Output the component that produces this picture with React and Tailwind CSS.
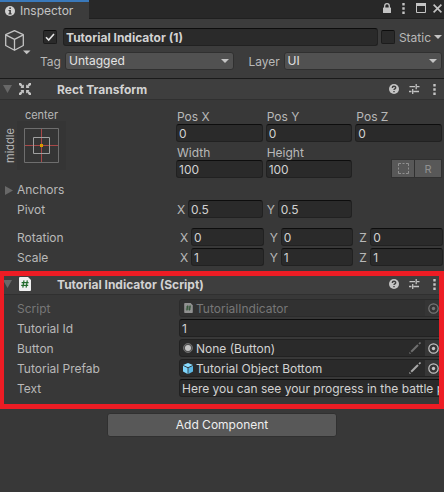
import React from "react";

const fieldBox =
  "h-[18px] min-w-0 rounded-[3px] border border-[#212121] border-t-[#0d0d0d] bg-[#2a2a2a] px-[2px] pt-px text-[12px] leading-4 text-[#d2d2d2] outline-none";

function Field({ label, value, className = "" }) {
  return (
    <input aria-label={label} defaultValue={value} className={`${fieldBox} w-full flex-1 ${className}`} />
  );
}

function Stacked({ label, value }) {
  return (
    <label className="flex min-w-0 flex-1 flex-col">
      <span className="h-4 pt-px pl-px leading-4">{label}</span>
      <input defaultValue={value} className={`${fieldBox} w-full`} />
    </label>
  );
}

function Axis({ name, value }) {
  return (
    <label className="flex min-w-0 flex-1 items-center">
      <span className="w-[11px] shrink-0 pt-[2px]">{name}</span>
      <input defaultValue={value} className={`${fieldBox} w-full flex-1`} />
    </label>
  );
}

function Caret({ className = "" }) {
  return (
    <svg viewBox="0 0 8 4" className={`h-1 w-2 ${className}`} fill="#c4c4c4" aria-hidden="true">
      <path d="M0 0h8L4 4z" />
    </svg>
  );
}

function Dropdown({ label, value, options, labelClass }) {
  return (
    <label className="flex min-w-0 flex-1 items-center">
      <span className={`shrink-0 pt-[2px] ${labelClass}`}>{label}</span>
      <span className="relative flex min-w-0 flex-1">
        <select
          defaultValue={value}
          className="h-[18px] w-full appearance-none rounded-[3px] border border-[#303030] bg-[#515151] px-[3px] text-[12px] leading-4 text-[#e4e4e4] outline-none"
        >
          {options.map((o) => (
            <option key={o}>{o}</option>
          ))}
        </select>
        <Caret className="pointer-events-none absolute top-[7px] right-[5px]" />
      </span>
    </label>
  );
}

function Kebab() {
  return (
    <svg viewBox="0 0 3 11" className="h-[11px] w-[3px]" fill="#c4c4c4" aria-hidden="true">
      <path d="M0.3 0h2.4v2.4H0.3zM0.3 4.3h2.4v2.4H0.3zM0.3 8.6h2.4V11H0.3z" />
    </svg>
  );
}

function ComponentHeader({ title, icon }) {
  return (
    <header className="flex h-[22px] items-center border-t border-b border-t-[#1a1a1a] border-b-[#303030] bg-[#3e3e3e] pr-2 pl-[3px]">
      <button aria-label={`Toggle ${title}`} className="mr-[7px]">
        <svg viewBox="0 0 9 8" className="h-2 w-[9px]" fill="#686868">
          <path d="M0 0h9L4.500 8z" />
        </svg>
      </button>
      {icon}
      <h2 className="ml-[26px] flex-1 pt-[2px] text-[12px] leading-4 font-bold text-[#d2d2d2]">{title}</h2>
      <button aria-label="Help" className="mr-[10px]">
        <svg viewBox="0 0 10 10" className="h-[10px] w-[10px]">
          <circle cx="5" cy="5" r="5" fill="#c4c4c4" />
          <path d="M3.300 3.900C3.300 1.800 6.700 1.800 6.700 3.700C6.700 4.900 5 4.800 5 6.100M5 6.900V8.300" fill="none" stroke="#3e3e3e" strokeWidth="1.400" />
        </svg>
      </button>
      <button aria-label="Presets" className="mr-[13px]">
        <svg viewBox="0 0 11 10" className="h-[10px] w-[11px]" stroke="#c4c4c4" strokeWidth="1.300" fill="none">
          <path d="M0.500 2.700H6M8 2.700H10.500M7.200 0V5.200M0 7.500H2.500M4.500 7.500H10M3.700 5V10" />
        </svg>
      </button>
      <button aria-label="More options">
        <Kebab />
      </button>
    </header>
  );
}

function ScriptIcon({ className = "" }) {
  return (
    <svg viewBox="0 0 12 14" className={className} aria-hidden="true">
      <path d="M1 0H9L12 3V13Q12 14 11 14H1Q0 14 0 13V1Q0 0 1 0z" fill="#f0f0f0" />
      <path d="M5 3.300L3.800 10.700M8.300 3.300L7.100 10.700M2.600 5.600H9.600M2.200 8.400H9.200" stroke="#236b2c" strokeWidth="1.200" fill="none" />
    </svg>
  );
}

function Row({ label, children, dim }) {
  return (
    <div className="flex h-[18px] items-center">
      <span className={`w-[179px] shrink-0 pt-[2px] pl-[17px] ${dim ? "text-[#777777]" : ""}`}>{label}</span>
      {children}
    </div>
  );
}

function ObjectField({ icon, value, pencil, dim }) {
  return (
    <div
      className={`flex h-[18px] min-w-0 flex-1 items-center rounded-[3px] border pl-[3px] ${
        dim ? "border-[#2b2b2b] bg-[#313131] text-[#777777]" : "border-[#212121] bg-[#2a2a2a] text-[#d2d2d2]"
      }`}
    >
      {icon}
      <span className="min-w-0 flex-1 truncate pt-[2px] leading-4">{value}</span>
      {pencil && (
        <button aria-label={`Edit ${value}`} className="mr-1">
          <svg viewBox="0 0 12 12" className="h-3 w-3" stroke={pencil} fill="none">
            <path d="M2.200 9.800L9 3" strokeWidth="2" />
            <path d="M0.500 11.500L1.300 10.700M10 2L11.500 0.500" strokeWidth="1.600" />
          </svg>
        </button>
      )}
      <button
        aria-label={`Select ${value}`}
        className={`flex h-4 w-[17px] items-center justify-center ${dim ? "bg-[#353535]" : "bg-[#373737]"}`}
      >
        <svg viewBox="0 0 11 11" className="h-[11px] w-[11px]">
          <circle cx="5.500" cy="5.500" r="4.700" fill="none" stroke={dim ? "#777777" : "#c4c4c4"} strokeWidth="1.200" />
          <circle cx="5.500" cy="5.500" r="1.700" fill={dim ? "#777777" : "#c4c4c4"} />
        </svg>
      </button>
    </div>
  );
}

function Tick({ label, checked }) {
  return (
    <span className="relative flex h-[14px] w-[14px] shrink-0">
      <input
        type="checkbox"
        aria-label={label}
        defaultChecked={checked}
        className="peer h-[14px] w-[14px] appearance-none rounded-[2px] border border-[#1c1c1c] border-t-[#0d0d0d] bg-[#2a2a2a]"
      />
      <svg viewBox="0 0 14 14" className="pointer-events-none absolute inset-0 hidden peer-checked:block" fill="none" stroke="#e4e4e4" strokeWidth="1.600">
        <path d="M3 7.300L5.700 10L11 4" />
      </svg>
    </span>
  );
}

export default function App() {
  return (
    <main className="min-h-screen overflow-hidden bg-[#383838] font-['Inter','Liberation_Sans',sans-serif] text-[12px] leading-4 text-[#b8b8b8]">
      <nav className="flex h-[19px] items-center bg-[#282828] pr-[2px] shadow-[inset_0_-1px_0_#202020]">
        <button className="flex h-[19px] w-[89px] items-center gap-[5px] border-t-2 border-[#3a79bb] bg-[#3c3c3c] pl-[5px] text-[#c4c4c4]">
          <svg viewBox="0 0 10 10" className="h-[10px] w-[10px]" aria-hidden="true">
            <circle cx="5" cy="5" r="5" fill="#d2d2d2" />
            <path d="M4.300 1.500H5.900V3H4.300zM3.500 4H5.900V7.300H6.600V8.400H3.500V7.300H4.300V5.100H3.500z" fill="#3c3c3c" />
          </svg>
          <span>Inspector</span>
        </button>
        <div className="flex flex-1 items-center justify-end pb-[3px]">
          <button aria-label="Lock" className="mr-[11px]">
            <svg viewBox="0 0 8 10" className="h-[10px] w-2">
              <rect y="4.500" width="8" height="5.500" rx="0.500" fill="#c4c4c4" />
              <path d="M1.700 5V3Q1.700 0.700 4 0.700T6.300 3V5" fill="none" stroke="#c4c4c4" strokeWidth="1.300" />
            </svg>
          </button>
          <button aria-label="Tab menu" className="mr-[11px]">
            <Kebab />
          </button>
          <button aria-label="Maximize" className="mr-[7px]">
            <svg viewBox="0 0 10 10" className="h-[10px] w-[10px]" fill="none" stroke="#c4c4c4">
              <path d="M0.500 0.500H9.500V9.500H0.500z" />
              <path d="M0 1.500H10" strokeWidth="3" />
            </svg>
          </button>
          <button aria-label="Close">
            <svg viewBox="0 0 9 9" className="h-[9px] w-[9px]" stroke="#c4c4c4" strokeWidth="1.600">
              <path d="M0.600 0.600L8.400 8.400M8.400 0.600L0.600 8.400" />
            </svg>
          </button>
        </div>
      </nav>

      <div className="flex bg-[#3c3c3c] pt-[9px] pr-[2px] pb-2">
        <button aria-label="Select icon" className="flex w-10 shrink-0 items-start pt-[2px] pl-[5px]">
          <svg viewBox="0 0 26 25" className="h-[25px] w-[26px]" fill="none" stroke="#c4c4c4" strokeWidth="1.300" strokeLinejoin="round">
            <path d="M9.500 0.700L18.300 4.700V15.500L9.500 20.300L0.700 15.500V4.700zM0.700 4.900L9.500 9.300L18.300 4.900M9.500 9.300V20.300" />
            <path d="M18 20.500H25.500L21.700 24.300z" fill="#c4c4c4" stroke="none" />
          </svg>
        </button>
        <div className="flex min-w-0 flex-1 flex-col gap-[6px]">
          <div className="flex h-[18px] items-center pl-[3px]">
            <Tick label="Active" checked />
            <Field label="Name" value="Tutorial Indicator (1)" className="mr-[3px] ml-[6px] font-bold" />
            <Tick label="Static" />
            <button className="flex shrink-0 items-center gap-[3px] pl-1">
              <span className="pt-px">Static</span>
              <Caret />
            </button>
          </div>
          <div className="flex h-[18px] gap-[15px]">
            <Dropdown label="Tag" labelClass="w-[25px]" value="Untagged" options={["Untagged", "Player", "MainCamera"]} />
            <Dropdown label="Layer" labelClass="w-[35px]" value="UI" options={["Default", "UI", "Water"]} />
          </div>
        </div>
      </div>

      <section>
        <ComponentHeader
          title="Rect Transform"
          icon={
            <svg viewBox="0 0 12 12" className="h-3 w-3" fill="#c4c4c4" aria-hidden="true">
              <path d="M4.900 4.900H1.600L2.400 3.700L0 2V0H2L3.700 2.400L4.900 1.600z" />
              <path d="M7.100 4.900V1.600L8.300 2.400L10 0H12V2L9.600 3.700L10.400 4.900z" />
              <path d="M4.900 7.100V10.400L3.700 9.600L2 12H0V10L2.400 8.300L1.600 7.100z" />
              <path d="M7.100 7.100H10.400L9.600 8.300L12 10V12H10L8.300 9.600L7.100 10.400z" />
            </svg>
          }
        />
        <div className="flex flex-col gap-[2px] pb-[7px]">
          <div className="flex pt-2">
            <div className="w-[176px] shrink-0">
              <div className="grid grid-cols-[17px_49px] grid-rows-[13px_49px] text-[11px] leading-[11px]">
                <span className="col-start-2 pt-[2px] text-center">center</span>
                <span className="flex rotate-180 items-end justify-center [writing-mode:vertical-rl]">
                  <span className="w-[13px] leading-[13px]">middle</span>
                </span>
                <button aria-label="Anchor presets" className="bg-[#353535]">
                  <svg viewBox="0 0 49 49" className="h-[49px] w-[49px]" fill="none">
                    <path d="M24.500 8V41M8 24.500H41" stroke="#a84848" />
                    <path d="M7.500 7.500H41.500V41.500H7.500z" stroke="#6e6e6e" />
                    <path d="M16.500 16.500H32.500V32.500H16.500z" stroke="#a0a0a0" />
                    <path d="M23 23h3v3h-3z" fill="#d99a00" />
                  </svg>
                </button>
              </div>
            </div>
            <div className="flex min-w-0 flex-1 flex-col gap-[2px] pr-[2px]">
              <div className="flex gap-[3px]">
                <Stacked label="Pos X" value="0" />
                <Stacked label="Pos Y" value="0" />
                <Stacked label="Pos Z" value="0" />
              </div>
              <div className="flex gap-[3px]">
                <Stacked label="Width" value="100" />
                <Stacked label="Height" value="100" />
                <div className="flex min-w-0 flex-1 items-end justify-end">
                  <button aria-label="Blueprint mode" className="flex h-[19px] w-6 items-center justify-center border border-[#303030] bg-[#585858]">
                    <svg viewBox="0 0 11 11" className="h-[11px] w-[11px]" fill="none" stroke="#909090">
                      <path d="M0.500 3V0.500H3M4.500 0.500H6.500M8 0.500H10.500V3M10.500 4.500V6.500M10.500 8V10.500H8M6.500 10.500H4.500M3 10.500H0.500V8M0.500 6.500V4.500" />
                    </svg>
                  </button>
                  <button className="h-[19px] w-[27px] border border-l-0 border-[#303030] bg-[#585858] text-[11px] leading-4 text-[#909090]">R</button>
                </div>
              </div>
            </div>
          </div>
          <button className="flex h-[18px] items-center gap-1 pt-[2px] pl-[5px]">
            <svg viewBox="0 0 8 9" className="h-[9px] w-2" fill="#686868" aria-hidden="true">
              <path d="M0 0L8 4.500L0 9z" />
            </svg>
            Anchors
          </button>
          <div className="flex h-[18px] items-center pr-[2px]">
            <span className="w-[177px] shrink-0 pt-[2px] pl-[17px]">Pivot</span>
            <div className="flex min-w-0 flex-1 gap-1">
              <Axis name="X" value="0.5" />
              <Axis name="Y" value="0.5" />
              <span className="flex-1" />
            </div>
          </div>
          {[["Rotation", "0", "mt-2"], ["Scale", "1", ""]].map(([name, v, gap]) => (
            <div key={name} className={`flex h-[18px] items-center pr-px ${gap}`}>
              <span className="w-[180px] shrink-0 pt-[2px] pl-[17px]">{name}</span>
              <div className="flex min-w-0 flex-1 gap-[6px]">
                <Axis name="X" value={v} />
                <Axis name="Y" value={v} />
                <Axis name="Z" value={v} />
              </div>
            </div>
          ))}
        </div>
      </section>

      <section className="relative">
        <ComponentHeader title="Tutorial Indicator (Script)" icon={<ScriptIcon className="h-[14px] w-3" />} />
        <div className="flex flex-col gap-[2px] pt-1 pr-px pb-[10px]">
          <Row label="Script" dim>
            <ObjectField dim value="TutorialIndicator" icon={<ScriptIcon className="mr-[3px] ml-px h-[10px] w-[9px] opacity-50" />} />
          </Row>
          <Row label="Tutorial Id">
            <Field label="Tutorial Id" value="1" />
          </Row>
          <Row label="Button">
            <ObjectField
              value="None (Button)"
              pencil="#6e6e6e"
              icon={
                <svg viewBox="0 0 10 10" className="mr-[3px] h-[10px] w-[10px]" aria-hidden="true">
                  <circle cx="5" cy="5" r="4.500" fill="#505050" stroke="#6e6e6e" />
                  <circle cx="5" cy="5" r="3" fill="#c4c4c4" />
                </svg>
              }
            />
          </Row>
          <Row label="Tutorial Prefab">
            <ObjectField
              value="Tutorial Object Bottom"
              pencil="#a8a8a8"
              icon={
                <svg viewBox="0 0 10 11" className="mr-[3px] h-[11px] w-[10px]" aria-hidden="true">
                  <path d="M5 0L10 2L5 4.300L0 2z" fill="#8bdcff" />
                  <path d="M0 2.800L4.600 5V11L0 8.500z" fill="#7fd6fd" />
                  <path d="M10 2.800L5.400 5V11L10 8.500z" fill="#5cb8e4" />
                </svg>
              }
            />
          </Row>
          <Row label="Text">
            <Field label="Text" value="Here you can see your progress in the battle pass" />
          </Row>
        </div>
        <div className="pointer-events-none absolute inset-x-0 -top-[2px] -bottom-[2px] border-[5px] border-l-4 border-[#ed1c24]" />
      </section>

      <div className="flex justify-center pt-[6px]">
        <button className="h-6 w-[230px] rounded-[3px] border border-[#303030] bg-[#585858] text-[#eeeeee]">Add Component</button>
      </div>
    </main>
  );
}
